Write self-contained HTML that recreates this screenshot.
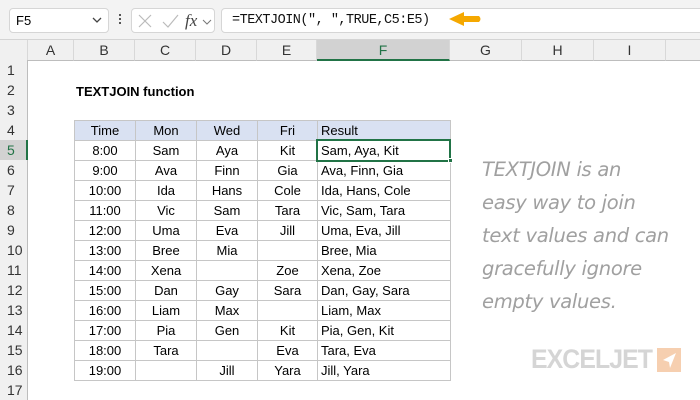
<!DOCTYPE html><html><head><style>
*{margin:0;padding:0;box-sizing:border-box}
body{width:700px;height:400px;overflow:hidden;background:#fff;font-family:"Liberation Sans",sans-serif;position:relative}
.a{position:absolute}
.top{left:0;top:0;width:700px;height:40px;background:#f3f3f3;border-bottom:1px solid #d4d4d4}
.box{background:#fff;border:1px solid #d6d6d6;border-radius:4px}
.ch{top:40px;height:21px;background:#f0f0f0;border-right:1px solid #d8d8d8;border-bottom:1px solid #bdbdbd;font-size:14px;color:#333;text-align:center;line-height:20px}
.rh{left:0;width:28px;height:20px;background:#f0f0f0;border-right:1px solid #bdbdbd;font-size:14px;color:#333;line-height:20px;padding-left:7px}
.c{height:20px;border-right:1px solid #c6c6c6;border-bottom:1px solid #c6c6c6;font-size:13px;line-height:19px;text-align:center;color:#000;white-space:nowrap}
.l{text-align:left;padding-left:3px}
.note{left:482px;font-size:19.5px;color:#a0a0a0;font-family:"DejaVu Sans",sans-serif;font-weight:200;font-style:italic;letter-spacing:-0.3px;white-space:nowrap}
</style></head><body>
<div class="a top"></div>
<div class="a box" style="left:9px;top:8px;width:100px;height:25px;font-size:13px;line-height:23px;padding-left:6px">F5</div>
<svg class="a" style="left:92px;top:17px" width="10" height="7"><path d="M1 1 L5 5 L9 1" stroke="#444" stroke-width="1.3" fill="none"/></svg>
<div class="a" style="left:119px;top:14px;width:2px;height:2px;background:#555;box-shadow:0 4px #555,0 8px #555"></div>
<div class="a box" style="left:131px;top:8px;width:84px;height:25px"></div>
<svg class="a" style="left:136px;top:12px" width="80" height="18"><path d="M3 3 L15 15 M15 3 L3 15" stroke="#bbb" stroke-width="1.2"/><path d="M27 10 L32 15 L42 3" stroke="#bbb" stroke-width="1.2" fill="none"/><text x="49" y="14" font-family="Liberation Serif" font-style="italic" font-size="17" fill="#444">fx</text><path d="M67 8 L71 12 L75 8" stroke="#777" stroke-width="1" fill="none"/></svg>
<div class="a box" style="left:221px;top:8px;width:490px;height:25px;font-family:'Liberation Mono',monospace;font-size:13.5px;letter-spacing:-0.5px;line-height:23px;padding-left:10px;color:#111">=TEXTJOIN(", ",TRUE,C5:E5)</div>
<svg class="a" style="left:446px;top:11px" width="40" height="17"><path d="M3 8 L18 1 L18 5 L33 5 Q36 8 33 11 L18 11 L18 15 Z" fill="#f5a800"/></svg>
<div class="a ch" style="left:0;width:28px"></div>
<div class="a ch" style="left:28px;width:46px">A</div>
<div class="a ch" style="left:74px;width:61px">B</div>
<div class="a ch" style="left:135px;width:61px">C</div>
<div class="a ch" style="left:196px;width:61px">D</div>
<div class="a ch" style="left:257px;width:60px">E</div>
<div class="a ch" style="left:317px;width:133px;background:#d2d2d2;border-bottom:2px solid #217346;color:#217346">F</div>
<div class="a ch" style="left:450px;width:72px">G</div>
<div class="a ch" style="left:522px;width:72px">H</div>
<div class="a ch" style="left:594px;width:72px">I</div>
<div class="a ch" style="left:666px;width:40px"></div>
<div id="rows"></div>
<div class="a" style="left:76px;top:84px;font-size:13px;font-weight:bold">TEXTJOIN function</div>
<div id="tbl"></div>
<div class="a note" style="top:158px">TEXTJOIN is an</div>
<div class="a note" style="top:191px">easy way to join</div>
<div class="a note" style="top:224px">text values and can</div>
<div class="a note" style="top:257px">gracefully ignore</div>
<div class="a note" style="top:290px">empty values.</div>
<div class="a" style="left:531px;top:344px;font-size:27px;font-weight:bold;color:#d5d5d5;letter-spacing:-1px;font-family:'Liberation Sans',sans-serif;transform:scaleX(0.92);transform-origin:left">EXCELJET</div>
<svg class="a" style="left:657px;top:348px" width="24" height="24"><rect width="24" height="24" fill="#f6cfb0"/><path d="M19 5 L6 12 L12 14 L13 20 Z" fill="#fff"/></svg>
<script>
var r='';for(var i=1;i<=17;i++){var t=40+20*i;r+='<div class="a rh" style="top:'+t+'px;'+(i==5?'background:#d2d2d2;color:#217346;border-right:2px solid #217346':'')+'">'+i+'</div>';}
document.getElementById('rows').outerHTML=r;
var d=[["Time","Mon","Wed","Fri","Result"],["8:00","Sam","Aya","Kit","Sam, Aya, Kit"],["9:00","Ava","Finn","Gia","Ava, Finn, Gia"],["10:00","Ida","Hans","Cole","Ida, Hans, Cole"],["11:00","Vic","Sam","Tara","Vic, Sam, Tara"],["12:00","Uma","Eva","Jill","Uma, Eva, Jill"],["13:00","Bree","Mia","","Bree, Mia"],["14:00","Xena","","Zoe","Xena, Zoe"],["15:00","Dan","Gay","Sara","Dan, Gay, Sara"],["16:00","Liam","Max","","Liam, Max"],["17:00","Pia","Gen","Kit","Pia, Gen, Kit"],["18:00","Tara","","Eva","Tara, Eva"],["19:00","","Jill","Yara","Jill, Yara"]];
var xs=[74,135,196,257,317,450],h='';
d.forEach(function(row,ri){var t=120+20*ri;row.forEach(function(v,ci){var st='left:'+xs[ci]+'px;top:'+t+'px;width:'+(xs[ci+1]-xs[ci]+1)+'px;height:21px;border:1px solid #c6c6c6;';if(ri==0)st+='background:#d9e1f2;';h+='<div class="a c'+(ci==4?' l':'')+'" style="'+st+'">'+v+'</div>';});});
h+='<div class="a" style="left:316px;top:139px;width:135px;height:23px;border:2px solid #217346"></div><div class="a" style="left:448px;top:158px;width:5px;height:5px;background:#217346;border:1px solid #fff"></div>';
document.getElementById('tbl').outerHTML=h;
</script>
</body></html>
